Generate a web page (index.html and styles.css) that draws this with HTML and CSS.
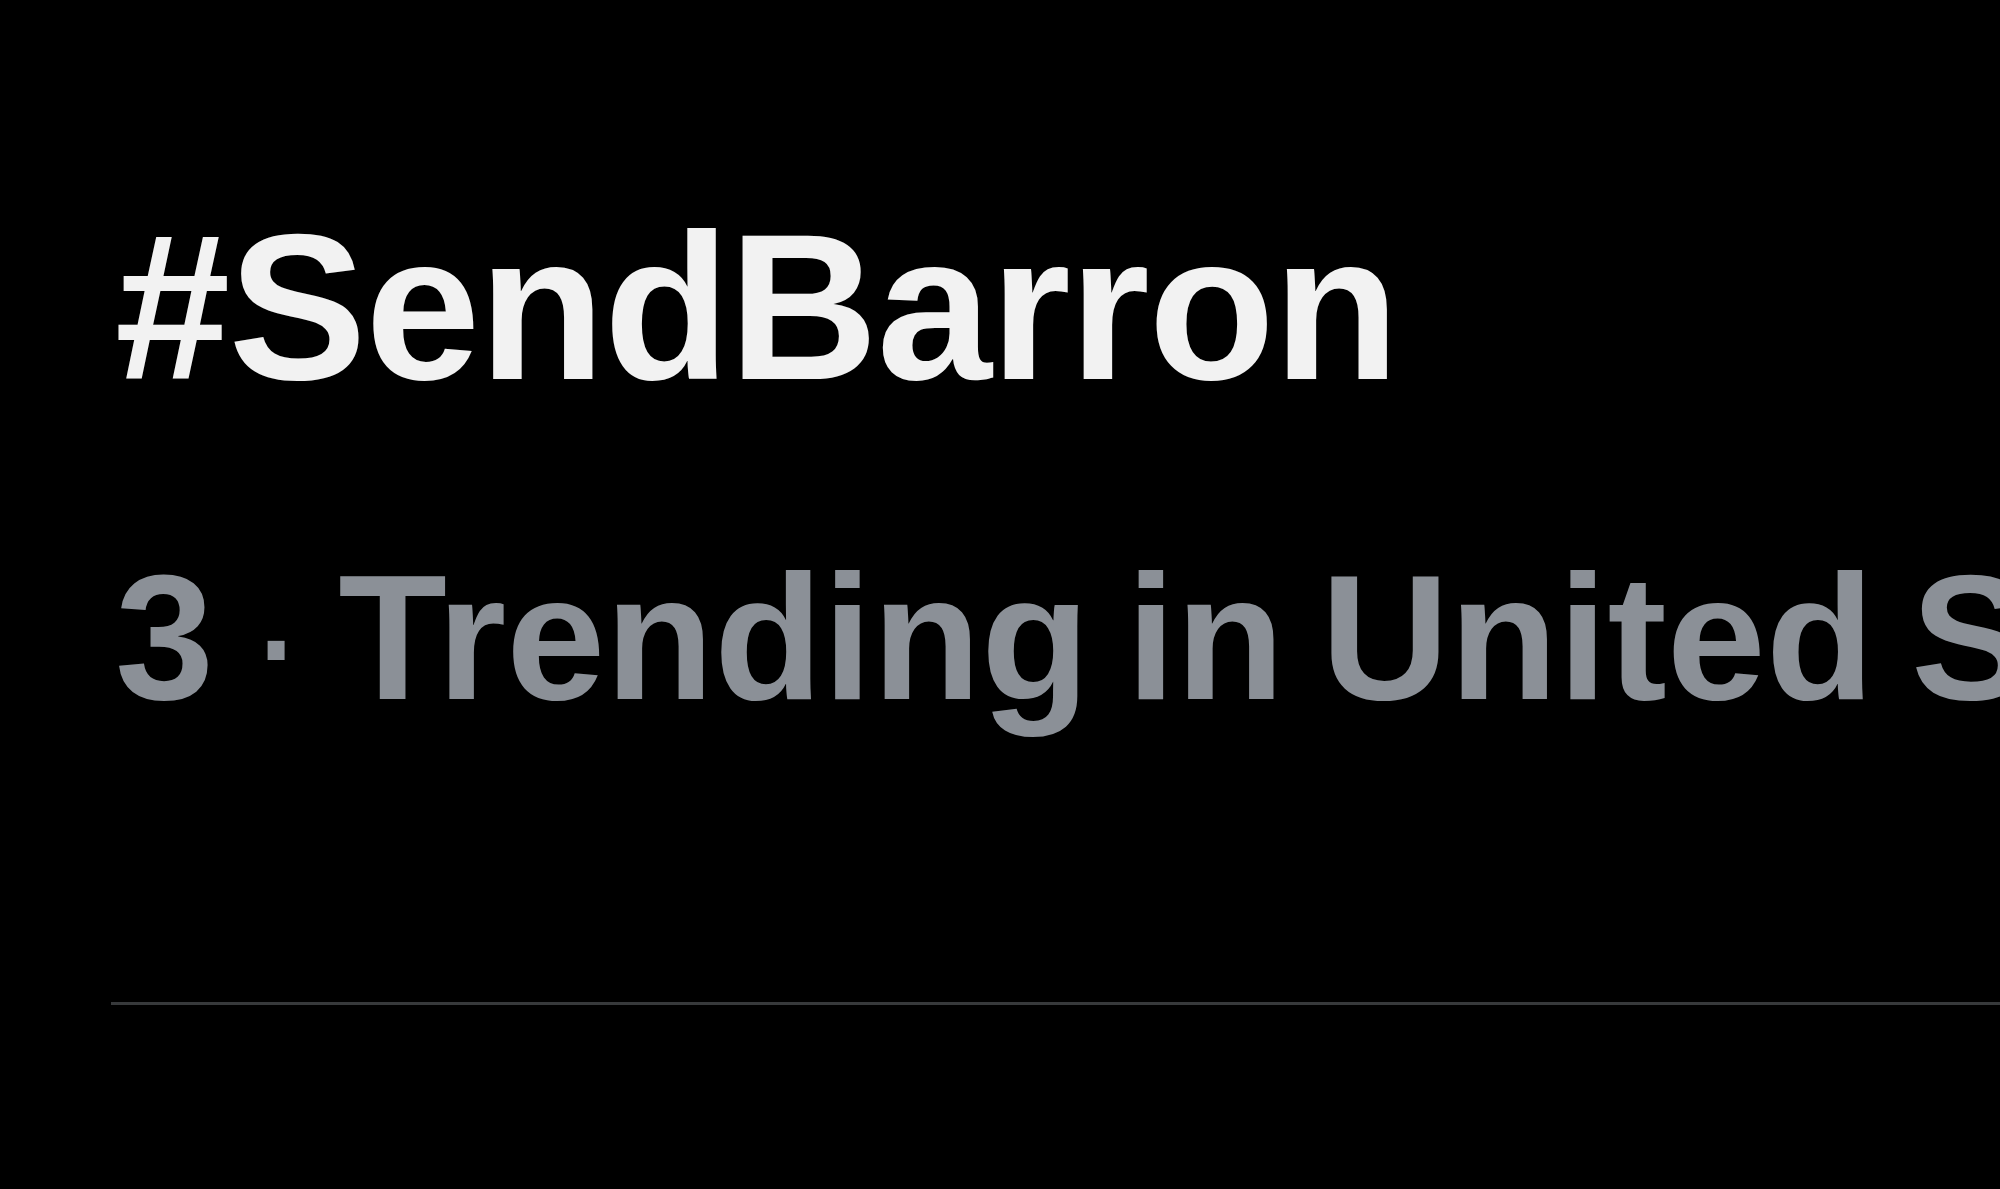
FILE: index.html
```html
<!DOCTYPE html>
<html lang="en">
<head>
  <meta charset="UTF-8">
  <title>Trend</title>
  <link rel="stylesheet" href="styles.css">
</head>
<body>
  <main class="trend">
    <h1 class="trend-tag">#SendBarron</h1>
    <p class="trend-meta">3 <span class="dot">·</span> Trending in United States</p>
  </main>
</body>
</html>
```

FILE: styles.css
```css
* {
  margin: 0;
  padding: 0;
  box-sizing: border-box;
}

body {
  background-color: #000;
  font-family: 'Liberation Sans', Arial, sans-serif;
  overflow: hidden;
  height: 100vh;
}

.trend {
  display: flex;
  flex-direction: column;
  gap: 138px;
  margin-left: 111px;
  padding: 204px 0 275px 4px;
  border-bottom: 3px solid #37393b;
  white-space: nowrap;
  overflow: hidden;
}

.trend-tag {
  color: #f2f2f2;
  font-size: 207px;
  font-weight: bold;
  line-height: 1;
  letter-spacing: -1.5px;
}

.trend-meta {
  color: #8b9097;
  font-size: 178px;
  font-weight: bold;
  line-height: 1;
  word-spacing: -13px;
}

.trend-meta .dot {
  font-weight: normal;
  margin: 0 -4px;
}
```
